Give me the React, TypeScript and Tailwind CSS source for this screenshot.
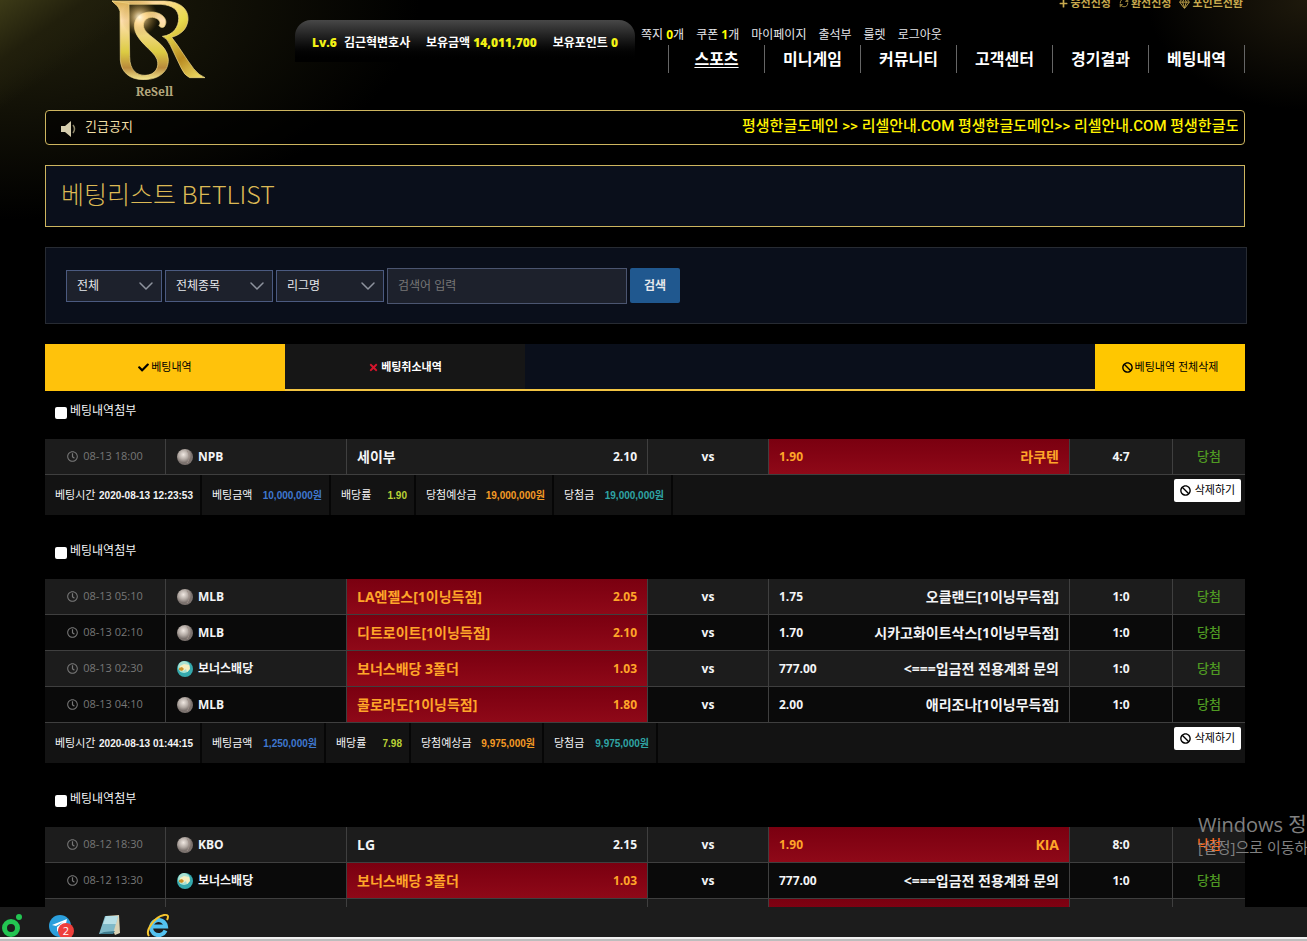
import { useState, ReactNode } from 'react';
import { FaBan, FaCheck, FaPlus, FaRegClock, FaTimes } from 'react-icons/fa';
import { ChevronDown, Gem, RefreshCw } from 'lucide-react';

type Match = {
  time: string;
  league: string;
  home: string;
  homeOdds: string;
  away: string;
  awayOdds: string;
  score: string;
  result: string;
  pick: 'home' | 'away';
};

type Slip = {
  id: string;
  matches: Match[];
  summary: { label: string; value: string; color: string; width: string }[];
};

const slips: Slip[] = [
  {
    id: 'slip-1',
    matches: [
      { time: '08-13 18:00', league: 'NPB', home: '세이부', homeOdds: '2.10', away: '라쿠텐', awayOdds: '1.90', score: '4:7', result: '당첨', pick: 'away' },
    ],
    summary: [
      { label: '베팅시간', value: '2020-08-13 12:23:53', color: 'text-gray-100', width: 'w-[157px]' },
      { label: '베팅금액', value: '10,000,000원', color: 'text-[#3f78d0]', width: 'w-[129px]' },
      { label: '배당률', value: '1.90', color: 'text-[#b9d136]', width: 'w-[85px]' },
      { label: '당첨예상금', value: '19,000,000원', color: 'text-[#f39a25]', width: 'w-[138px]' },
      { label: '당첨금', value: '19,000,000원', color: 'text-[#2fa5a5]', width: 'w-[119px]' },
    ],
  },
  {
    id: 'slip-2',
    matches: [
      { time: '08-13 05:10', league: 'MLB', home: 'LA엔젤스[1이닝득점]', homeOdds: '2.05', away: '오클랜드[1이닝무득점]', awayOdds: '1.75', score: '1:0', result: '당첨', pick: 'home' },
      { time: '08-13 02:10', league: 'MLB', home: '디트로이트[1이닝득점]', homeOdds: '2.10', away: '시카고화이트삭스[1이닝무득점]', awayOdds: '1.70', score: '1:0', result: '당첨', pick: 'home' },
      { time: '08-13 02:30', league: '보너스배당', home: '보너스배당 3폴더', homeOdds: '1.03', away: '<===입금전 전용계좌 문의', awayOdds: '777.00', score: '1:0', result: '당첨', pick: 'home' },
      { time: '08-13 04:10', league: 'MLB', home: '콜로라도[1이닝득점]', homeOdds: '1.80', away: '애리조나[1이닝무득점]', awayOdds: '2.00', score: '1:0', result: '당첨', pick: 'home' },
    ],
    summary: [
      { label: '베팅시간', value: '2020-08-13 01:44:15', color: 'text-gray-100', width: 'w-[157px]' },
      { label: '베팅금액', value: '1,250,000원', color: 'text-[#3f78d0]', width: 'w-[124px]' },
      { label: '배당률', value: '7.98', color: 'text-[#b9d136]', width: 'w-[85px]' },
      { label: '당첨예상금', value: '9,975,000원', color: 'text-[#f39a25]', width: 'w-[133px]' },
      { label: '당첨금', value: '9,975,000원', color: 'text-[#2fa5a5]', width: 'w-[114px]' },
    ],
  },
  {
    id: 'slip-3',
    matches: [
      { time: '08-12 18:30', league: 'KBO', home: 'LG', homeOdds: '2.15', away: 'KIA', awayOdds: '1.90', score: '8:0', result: '낙첨', pick: 'away' },
      { time: '08-12 13:30', league: '보너스배당', home: '보너스배당 3폴더', homeOdds: '1.03', away: '<===입금전 전용계좌 문의', awayOdds: '777.00', score: '1:0', result: '당첨', pick: 'home' },
      { time: '', league: '', home: '', homeOdds: '', away: '', awayOdds: '', score: '', result: '', pick: 'away' },
    ],
    summary: [],
  },
];

const menu = ['스포츠', '미니게임', '커뮤니티', '고객센터', '경기결과', '베팅내역'];

const Logo = () => (
  <a href="#" className="flex w-[95px] flex-col items-center">
    <svg viewBox="330 0 285 240" className="h-20 w-full" aria-hidden="true">
      <defs>
        <linearGradient id="gold" x1="0" y1="0" x2="1" y2="1">
          <stop offset="0" stopColor="#c9a04a" />
          <stop offset=".25" stopColor="#ffd9a0" />
          <stop offset=".5" stopColor="#e9dc4e" />
          <stop offset=".75" stopColor="#b98b22" />
          <stop offset="1" stopColor="#f5e66c" />
        </linearGradient>
        <linearGradient id="goldStem" x1="0" y1="0" x2="0" y2="1">
          <stop offset="0" stopColor="#d9ae50" />
          <stop offset=".25" stopColor="#ffe0b0" />
          <stop offset=".65" stopColor="#dccb42" />
          <stop offset=".85" stopColor="#b98a3c" />
          <stop offset="1" stopColor="#f4e890" />
        </linearGradient>
        <radialGradient id="flare">
          <stop offset="0" stopColor="#fff8e0" />
          <stop offset=".35" stopColor="#ffd78a" stopOpacity=".6" />
          <stop offset="1" stopColor="#b08020" stopOpacity="0" />
        </radialGradient>
      </defs>
      <path
        d="M333 3H490C542 5 563 30 561 60C558 90 537 104 512 112C536 142 556 178 578 206Q594 226 612 233H566Q550 226 540 203L508 136Q498 114 484 109C518 105 533 80 533 55C533 30 516 16 480 13L345 13Z"
        fill="url(#gold)"
        stroke="#f5dc8c"
        strokeWidth="2"
      />
      <path
        d="M333 3L384 10L386 170C386 212 408 226 432 226C464 226 476 200 468 178C458 150 400 122 400 78C400 50 425 34 455 36C488 39 503 62 490 80C484 85 475 81 474 76C483 68 472 54 455 52C436 51 424 64 428 82C434 110 500 128 502 178C503 214 475 238 430 239C385 240 360 215 358 180L357 34C353 18 342 12 333 3Z"
        fill="url(#goldStem)"
        stroke="#f5dc8c"
        strokeWidth="2"
      />
      <circle cx="416" cy="52" r="56" fill="url(#flare)" />
    </svg>
    <span className="mt-1 mr-2 font-['Noto_Serif','DejaVu_Serif',serif] text-[12px] leading-4 font-bold text-[#b3a67c]">ReSell</span>
  </a>
);

const LeagueIcon = ({ league }: { league: string }) =>
  league === '보너스배당' ? (
    <svg viewBox="0 0 16 16" className="size-4 shrink-0" aria-hidden="true">
      <circle cx="8" cy="8" r="8" fill="#35a9ad" />
      <circle cx="7" cy="6" r="6" fill="#a9e2d3" />
      <path d="M3 5l4-2 5 1 1 4-3 3-1-3-3 2-3-1z" fill="#f5efc0" />
      <path d="M2 7l3-1 2 2-2 2-3-1z" fill="#c9922a" />
    </svg>
  ) : (
    <svg viewBox="0 0 16 16" className="size-4 shrink-0" aria-hidden="true">
      <defs>
        <radialGradient id="ball" cx=".4" cy=".35">
          <stop offset="0" stopColor="#f0e8e2" />
          <stop offset=".6" stopColor="#b3aaa4" />
          <stop offset="1" stopColor="#7b726e" />
        </radialGradient>
      </defs>
      <circle cx="8" cy="8" r="8" fill="url(#ball)" />
      <path d="M10 2c3 3 3 8 0 12" fill="none" stroke="#9d8f88" />
    </svg>
  );

const SelectBox = ({ label, width }: { label: string; width: string }) => (
  <div className={`relative ${width}`}>
    <select
      aria-label={label}
      className="h-8 w-full appearance-none border border-[#4b5a80] bg-[#1d212c] pl-[10px] text-[12px] text-gray-200 outline-none"
    >
      <option>{label}</option>
    </select>
    <ChevronDown size={24} strokeWidth={1.5} className="pointer-events-none absolute top-1 right-1 text-[#8e939e]" />
  </div>
);

const Team = ({ picked, children }: { picked: boolean; children: ReactNode }) => (
  <td
    className={`px-[10px] ${
      picked ? 'bg-linear-to-b from-[#7a0010] to-[#8f0918] text-[#ffa629]' : 'text-gray-100'
    }`}
  >
    <div className="flex items-center justify-between whitespace-nowrap">{children}</div>
  </td>
);

const MatchRow = ({ match }: { match: Match }) => (
  <tr className="h-9 bg-[#1c1c1c] even:bg-[#0a0a0a]">
    <td className="text-[11px] text-[#777]">
      {match.time && (
        <div className="flex items-center justify-center gap-[5px]">
          <FaRegClock size={11} />
          {match.time}
        </div>
      )}
    </td>
    <td className="pl-[11px]">
      {match.league && (
        <div className="flex items-center gap-[5px]">
          <LeagueIcon league={match.league} />
          <span className="text-[12px] font-bold text-gray-100">{match.league}</span>
        </div>
      )}
    </td>
    <Team picked={match.pick === 'home'}>
      <span className="text-[14px]/4">{match.home}</span>
      <span>{match.homeOdds}</span>
    </Team>
    <td className="text-center text-gray-100">{match.score && 'vs'}</td>
    <Team picked={match.pick === 'away'}>
      <span>{match.awayOdds}</span>
      <span className="text-[14px]/4">{match.away}</span>
    </Team>
    <td className="text-center text-gray-100">{match.score}</td>
    <td className={`text-center text-[13px] ${match.result === '낙첨' ? 'text-[#ff6a1c]' : 'text-[#4f9a22]'}`}>
      {match.result}
    </td>
  </tr>
);

const BetSlip = ({ slip }: { slip: Slip }) => (
  <section className="mb-4">
    <div className="h-12 pt-3 pl-[10px]">
      <label htmlFor={slip.id} className="flex items-center gap-[3px] text-[12px] leading-4 text-gray-100">
        <input type="checkbox" id={slip.id} className="mt-[3px] size-3 appearance-none rounded-xs bg-white checked:bg-blue-500" />
        베팅내역첨부
      </label>
    </div>
    <table className="w-full table-fixed border-separate border-spacing-0 text-[12px] font-bold">
      <colgroup>
        <col className="w-[120px]" />
        <col className="w-[181px]" />
        <col className="w-[301px]" />
        <col className="w-[121px]" />
        <col className="w-[301px]" />
        <col className="w-[103px]" />
        <col className="w-[73px]" />
      </colgroup>
      <tbody className="[&_td]:border-b [&_td]:border-[#3f3f3f] [&_td:first-child]:font-normal [&_td:last-child]:font-medium [&_td:not(:first-child)]:border-l">
        {slip.matches.map((match, i) => (
          <MatchRow key={i} match={match} />
        ))}
      </tbody>
    </table>
    {slip.summary.length > 0 && (
      <div className="flex h-10 bg-[#131313]">
        {slip.summary.map((item) => (
          <div
            key={item.label}
            className={`flex shrink-0 items-center justify-between border-r-2 border-[#060606] pr-[7px] pl-[10px] whitespace-nowrap ${item.width}`}
          >
            <span className="text-[11px] text-gray-100">{item.label}</span>
            <span className={`font-['Liberation_Sans','Noto_Sans_CJK_KR',sans-serif] text-[10px] font-bold ${item.color}`}>
              {item.value}
            </span>
          </div>
        ))}
        <button
          type="button"
          className="mt-1 mr-1 ml-auto flex h-[23px] w-[67px] items-center justify-center gap-1 rounded-xs bg-white text-[11px] text-black"
        >
          <FaBan size={11} />
          삭제하기
        </button>
      </div>
    )}
  </section>
);

const Header = () => (
  <header className="flex h-[110px] items-start">
    <div className="ml-[66px]">
      <Logo />
    </div>
    <div className="mt-5 ml-[89px] flex h-[42px] w-[340px] shrink-0 items-center justify-between rounded-t-2xl bg-linear-to-b from-[#484848] to-black px-[17px] pt-[3px] text-[12px] font-bold whitespace-nowrap text-white">
      <span>
        <b className="mr-1 text-[#f1f115]">Lv.6</b> 김근혁변호사
      </span>
      <span>
        보유금액 <b className="text-[#f1f115]">14,011,700</b>
      </span>
      <span>
        보유포인트 <b className="text-[#f1f115]">0</b>
      </span>
    </div>
    <div className="ml-[6px] flex-1">
      <div className="-mt-[5px] flex h-[30px] justify-end gap-2 pr-[2px] text-[11px] leading-4 font-bold text-[#c7a94e]">
        <a href="#" className="flex h-4 items-center gap-[2px]">
          <FaPlus size={9} />
          충전신청
        </a>
        <a href="#" className="flex h-4 items-center gap-[2px]">
          <RefreshCw size={10} />
          환전신청
        </a>
        <a href="#" className="flex h-4 items-center gap-[2px]">
          <Gem size={11} />
          포인트전환
        </a>
      </div>
      <div className="flex h-5 items-center gap-3 text-[12px] leading-4 text-gray-200">
        <a href="#">
          쪽지 <b className="text-[#ffff00]">0</b>개
        </a>
        <a href="#">
          쿠폰 <b className="text-[#ffff00]">1</b>개
        </a>
        <a href="#">마이페이지</a>
        <a href="#">출석부</a>
        <a href="#">룰렛</a>
        <a href="#">로그아웃</a>
      </div>
      <nav className="ml-[27px] flex h-7 border-r border-[#666]">
        {menu.map((item, i) => (
          <a
            key={item}
            href="#"
            className={`flex flex-1 items-center justify-center border-l border-[#666] text-[16px] font-bold text-white ${
              i === 0 ? 'underline underline-offset-2' : ''
            }`}
          >
            {item}
          </a>
        ))}
      </nav>
    </div>
  </header>
);

const Taskbar = () => (
  <footer className="shrink-0 bg-[#1c1c1c]">
    <div className="flex h-[30px] items-end gap-6 overflow-hidden">
      <svg viewBox="0 0 24 24" className="size-6" aria-label="메신저">
        <circle cx="11" cy="15" r="6.5" fill="none" stroke="#23c552" strokeWidth="5" />
        <circle cx="19" cy="4" r="3" fill="#23c552" />
      </svg>
      <svg viewBox="0 0 26 24" className="h-6 w-[26px]" aria-label="텔레그램">
        <circle cx="12" cy="13" r="11" fill="#2b9fdc" />
        <path d="M4 12l15-6-3 14-5-4-2 3v-5l6-5-7 4z" fill="#fff" />
        <circle cx="18" cy="18" r="8" fill="#ee3f3b" />
        <text x="18" y="22" textAnchor="middle" fontSize="11" fill="#fff" fontFamily="Open Sans">2</text>
      </svg>
      <svg viewBox="0 0 24 24" className="size-6" aria-label="메모장">
        <path d="M8 3l13-1 1 18-5 2z" fill="#d9d2b5" />
        <path d="M7 3h13l-5 18H1z" fill="#7fb9c8" />
        <path d="M8 3h12l-2 8H5z" fill="#b7dfe6" />
        <path d="M1 21h14l2-3-11 1z" fill="#3f7c8e" />
      </svg>
      <svg viewBox="0 0 24 24" className="size-6" aria-label="인터넷">
        <path d="M19.5 17.5A7.5 7.5 0 1 1 20 13.5H7" fill="none" stroke="#53c2f0" strokeWidth="4" />
        <path d="M3 23C-1 18 8 4 18 2c4-.6 5 1 3 5" fill="none" stroke="#f6c52d" strokeWidth="2" />
      </svg>
    </div>
    <div className="h-[2px] bg-[#f0f0f0]" />
    <div className="h-[2px] bg-[#bdbdbd]" />
  </footer>
);

const App = () => {
  const [keyword, setKeyword] = useState('');

  return (
    <div className="relative flex h-screen flex-col overflow-hidden bg-black font-['Open_Sans','Noto_Sans_CJK_KR',sans-serif]">
      <div className="min-h-0 flex-1 overflow-hidden bg-[linear-gradient(145deg,#3c3a17_0px,#211f0c_50px,transparent_90px),radial-gradient(ellipse_420px_220px_at_0_0,#24220d,transparent),radial-gradient(ellipse_160px_110px_at_100%_0,#1e190c,transparent)] bg-no-repeat">
        <div className="mr-[62px] ml-[45px]">
          <Header />

          <div className="flex h-[35px] items-center rounded-sm border border-[#cdb55f] bg-black/60 pr-[6px] pb-[2px] pl-[15px]">
            <svg viewBox="0 0 16 16" className="mt-1 size-4" aria-hidden="true">
              <path d="M0 5h4l6-5v16l-6-5H0z" fill="#d6ceae" />
              <path d="M12 4q3 4 0 8" fill="none" stroke="#8d8669" strokeWidth="1.5" />
            </svg>
            <span className="ml-2 text-[13px] text-[#f0dfa5]">긴급공지</span>
            <p className="ml-auto w-[496px] overflow-hidden font-['Roboto','Noto_Sans_CJK_KR',sans-serif] text-[15px] font-medium whitespace-nowrap text-[#fff200]">
              평생한글도메인 &gt;&gt; 리셀안내.COM 평생한글도메인&gt;&gt; 리셀안내.COM 평생한글도
            </p>
          </div>

          <h1 className="mt-5 h-[62px] border border-[#cdb55f] bg-[#0a0f1b] pl-[15px] font-['Noto_Sans_CJK_KR',sans-serif] text-[25px] leading-[54px] font-light text-[#dcb955]">
            베팅리스트 BETLIST
          </h1>

          <form
            onSubmit={(e) => e.preventDefault()}
            className="mt-5 -mr-[2px] flex h-[77px] items-center gap-[3px] border border-[#272b33] bg-[#0a0f1b] pl-5"
          >
            <SelectBox label="전체" width="w-24" />
            <SelectBox label="전체종목" width="w-[108px]" />
            <SelectBox label="리그명" width="w-[108px]" />
            <input
              type="text"
              aria-label="검색어 입력"
              placeholder="검색어 입력"
              value={keyword}
              onChange={(e) => setKeyword(e.target.value)}
              className="h-9 w-60 border border-[#4b5570] bg-[#1d212c] px-[10px] text-[12px] text-gray-200 outline-none placeholder:text-[#777]"
            />
            <button type="submit" className="h-[35px] w-[50px] rounded-xs bg-[#20588f] text-[12px] font-bold text-gray-200">
              검색
            </button>
          </form>

          <div className="mt-5 flex h-[47px] border-b-2 border-[#f2c443] bg-[#0a0f1b] text-[11px]">
            <button type="button" className="-mb-[2px] flex w-60 items-center justify-center gap-[2px] bg-[#ffc20b] text-black">
              <FaCheck size={11} />
              베팅내역
            </button>
            <button type="button" className="flex w-60 items-center justify-center gap-[2px] bg-[#161616] pt-[2px] font-bold text-white">
              <FaTimes size={11} className="text-[#d4152c]" />
              베팅취소내역
            </button>
            <button
              type="button"
              className="-mb-[2px] ml-auto flex w-[150px] items-center justify-center gap-[2px] bg-[#ffc700] text-black"
            >
              <FaBan size={11} />
              베팅내역 전체삭제
            </button>
          </div>

          {slips.map((slip) => (
            <BetSlip key={slip.id} slip={slip} />
          ))}
        </div>
      </div>

      {/* Windows activation watermark, runs off the right edge */}
      <div className="pointer-events-none absolute right-0 bottom-[84px] w-[109px] overflow-hidden whitespace-nowrap text-[#808080]">
        <p className="text-[20px] leading-6">Windows 정</p>
        <p className="text-[15px] leading-5">[설정]으로 이동하</p>
      </div>

      <Taskbar />
    </div>
  );
};

export default App;
